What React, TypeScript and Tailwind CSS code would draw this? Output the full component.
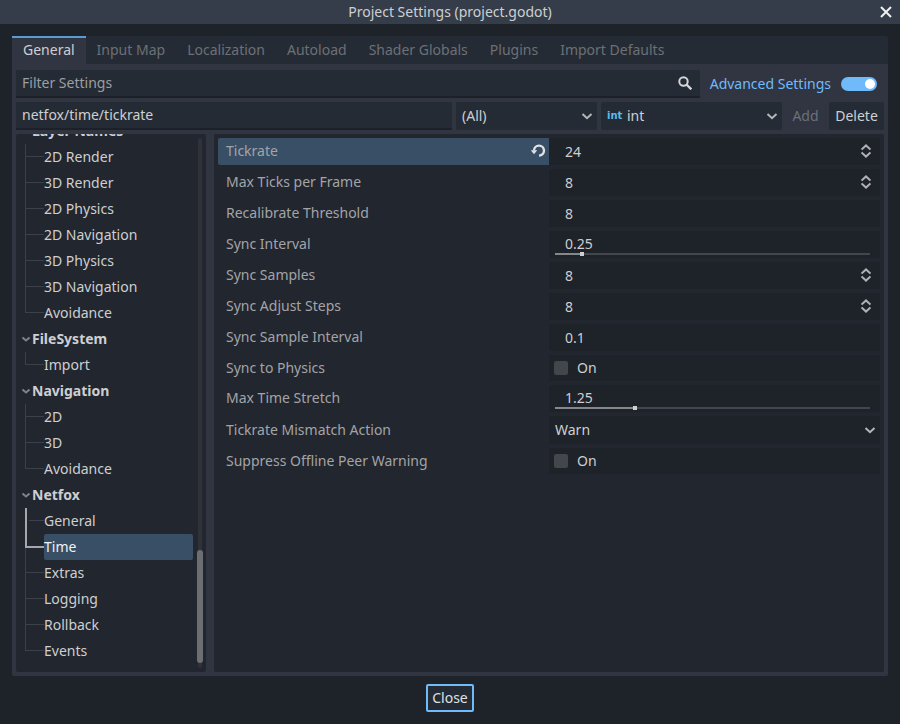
import { useState } from "react";
import type { ReactNode } from "react";

const TABS = ["General", "Input Map", "Localization", "Autoload", "Shader Globals", "Plugins", "Import Defaults"];

const TREE = [
  { name: "Layer Names", items: ["2D Render", "3D Render", "2D Physics", "2D Navigation", "3D Physics", "3D Navigation", "Avoidance"] },
  { name: "FileSystem",  items: ["Import"] },
  { name: "Navigation",  items: ["2D", "3D", "Avoidance"] },
  { name: "Netfox",      items: ["General", "Time", "Extras", "Logging", "Rollback", "Events"] },
];

type Setting =
  | { kind: "spin" | "text"; label: string; value: string; changed?: boolean }
  | { kind: "slider"; label: string; value: number; min: number; max: number }
  | { kind: "check"; label: string }
  | { kind: "select"; label: string; options: string[] };

const SETTINGS: Setting[] = [
  { kind: "spin",   label: "Tickrate", value: "24", changed: true },
  { kind: "spin",   label: "Max Ticks per Frame", value: "8" },
  { kind: "text",   label: "Recalibrate Threshold", value: "8" },
  { kind: "slider", label: "Sync Interval", value: 0.25, min: 0.1, max: 2 },
  { kind: "spin",   label: "Sync Samples", value: "8" },
  { kind: "spin",   label: "Sync Adjust Steps", value: "8" },
  { kind: "text",   label: "Sync Sample Interval", value: "0.1" },
  { kind: "check",  label: "Sync to Physics" },
  { kind: "slider", label: "Max Time Stretch", value: 1.25, min: 1, max: 2 },
  { kind: "select", label: "Tickrate Mismatch Action", options: ["Warn", "Disconnect", "Adjust", "Signal"] },
  { kind: "check",  label: "Suppress Offline Peer Warning" },
];

// ── icons ──
function Chevron() {
  return (
    <svg className="pointer-events-none shrink-0" width="12" height="12" viewBox="0 0 12 12" fill="none" stroke="#b4b6ba" strokeWidth="2" aria-hidden="true">
      <path d="M1.5 4 6 8.2 10.5 4" />
    </svg>
  );
}

function Updown() {
  return (
    <svg width="10" height="14" viewBox="0 0 10 14" fill="none" stroke="#b0b2b6" strokeWidth="2" aria-hidden="true">
      <path d="M.5 5.6 5 1.4l4.5 4.2M.5 8.4 5 12.6l4.5-4.2" />
    </svg>
  );
}

function Reload() {
  return (
    <svg width="16" height="16" viewBox="0 0 16 16" fill="none" aria-hidden="true">
      <path d="M4 7.6a5 5 0 1 1 5 5" stroke="#e0e2e5" strokeWidth="2.4" />
      <path d="M.8 7.2h6.4L4 11.2Z" fill="#e0e2e5" />
    </svg>
  );
}

// ── tree ──
function TreeGroup({ name, items, selected, onSelect }: { name: string; items: string[]; selected: string; onSelect: (path: string) => void }) {
  const current = items.findIndex(item => `${name}/${item}` === selected);
  return (
    <li className="shrink-0">
      <div className="flex h-[26px] items-center gap-0.5 pl-1.5 font-bold">
        <svg width="8" height="8" viewBox="0 0 8 8" fill="none" stroke="#7e8187" strokeWidth="2" aria-hidden="true">
          <path d="M.5 2.5 4 5.5l3.5-3" />
        </svg>
        {name}
      </div>
      <ul>
        {items.map((item, i) => {
          const above = i < current;
          const active = i === current;
          const last = i === items.length - 1;
          return (
            <li key={item} className="flex h-[26px] pl-[9px]">
              <div className="flex w-[19px] shrink-0 flex-col">
                <div className={active ? "h-[14px] border-b-2 border-l-2 border-[#a5a7ab]" : above ? "h-[13px] border-l-2 border-[#a5a7ab] pl-0.5" : "h-[13px] border-b border-l border-[#3c4048]"}>
                  {above && <div className="h-full border-b border-[#3c4048]" />}
                </div>
                {!last && <div className={above ? "flex-1 border-l-2 border-[#a5a7ab]" : "flex-1 border-l border-[#3c4048]"} />}
              </div>
              <button type="button" onClick={() => onSelect(`${name}/${item}`)}
                className={active ? "flex-1 rounded-[2px] bg-[#394f66] text-left text-[#f0f2f5]" : "flex-1 rounded-[2px] text-left"}>
                {item}
              </button>
            </li>
          );
        })}
      </ul>
    </li>
  );
}

// ── inspector rows ──
function Row({ id, label, changed, children }: { id: string; label: string; changed?: boolean; children: ReactNode }) {
  return (
    <div className="grid grid-cols-2">
      <div className={changed ? "flex items-center justify-between rounded-l-[2px] bg-[#394f66] pb-px pl-2 pr-[3px]" : "flex items-center justify-between pb-px pl-2"}>
        <label htmlFor={id} className="text-[#a2a4a8]">{label}</label>
        {changed && <button type="button" aria-label="Reset to default"><Reload /></button>}
      </div>
      <div className="rounded-[2px] bg-[#1e2229]">{children}</div>
    </div>
  );
}

function SliderField({ id, label, initial, min, max }: { id: string; label: string; initial: number; min: number; max: number }) {
  const [value, setValue] = useState(initial);
  const fill = ((value - min) / (max - min)) * 100;
  return (
    <div className="flex h-[27px] flex-col pl-1.5 pr-2.5">
      <input id={id} value={value} onChange={e => setValue(Number(e.target.value) || min)}
        className="h-[22px] w-full bg-transparent px-2.5 pt-0.5 outline-none" />
      <input type="range" aria-label={`${label} slider`} min={min} max={max} step={0.01} value={value}
        onChange={e => setValue(Number(e.target.value))}
        style={{ background: `linear-gradient(to right, #85878b ${fill}%, #43464d ${fill}%)` }}
        className="h-0.5 w-full appearance-none outline-none [&::-webkit-slider-thumb]:size-1 [&::-webkit-slider-thumb]:appearance-none [&::-webkit-slider-thumb]:bg-[#cdcfd2]" />
    </div>
  );
}

function SettingRow({ setting }: { setting: Setting }) {
  const id = setting.label.toLowerCase().replaceAll(" ", "_");

  if (setting.kind === "slider") {
    return (
      <Row id={id} label={setting.label}>
        <SliderField id={id} label={setting.label} initial={setting.value} min={setting.min} max={setting.max} />
      </Row>
    );
  }
  if (setting.kind === "check") {
    return (
      <Row id={id} label={setting.label}>
        <label className="flex h-[26px] items-center gap-[9px] pl-[5px]">
          <input id={id} type="checkbox" className="size-3.5 appearance-none rounded-[2px] bg-[#43464b] checked:bg-[#70bafa]" />
          On
        </label>
      </Row>
    );
  }
  if (setting.kind === "select") {
    return (
      <Row id={id} label={setting.label}>
        <div className="flex h-7 items-center pl-1.5 pr-1">
          <select id={id} className="h-full flex-1 appearance-none bg-transparent outline-none">
            {setting.options.map(o => <option key={o}>{o}</option>)}
          </select>
          <Chevron />
        </div>
      </Row>
    );
  }
  return (
    <Row id={id} label={setting.label} changed={setting.changed}>
      <div className="flex h-[27px] items-center pb-px pl-4 pr-[9px]">
        <input id={id} defaultValue={setting.value} className="h-full min-w-0 flex-1 bg-transparent outline-none" />
        {setting.kind === "spin" && <button type="button" aria-label={`Step ${setting.label}`}><Updown /></button>}
      </div>
    </Row>
  );
}

export default function App() {
  const [tab, setTab]           = useState("General");
  const [selected, setSelected] = useState("Netfox/Time");
  const [advanced, setAdvanced] = useState(true);

  return (
    <div className="flex h-screen flex-col bg-[#1e2229] font-['Noto_Sans',sans-serif] text-[14px] leading-5 text-[#cdcfd2]">
      {/* Title bar */}
      <header className="flex h-6 shrink-0 items-center bg-[#363d4a] px-2">
        <div className="w-3" />
        <h1 className="flex-1 text-center">Project Settings (project.godot)</h1>
        <button type="button" aria-label="Close window">
          <svg width="12" height="12" viewBox="0 0 12 12" stroke="#eef0f2" strokeWidth="2" aria-hidden="true">
            <path d="m1 1 10 10M11 1 1 11" />
          </svg>
        </button>
      </header>

      <main className="mx-3 mt-3 flex min-h-0 flex-1 flex-col">
        <nav className="flex h-7 shrink-0 rounded-t-[2px] bg-[#252b34]">
          {TABS.map(t => (
            <button key={t} type="button" onClick={() => setTab(t)}
              className={t === tab
                ? "border-t-2 border-[#5b9bd3] bg-[#303541] px-[11px] pb-0.5"
                : "px-[11px] text-[#6c7077]"}>
              {t}
            </button>
          ))}
        </nav>

        <div className="flex min-h-0 flex-1 flex-col gap-1 rounded-b-[2px] bg-[#303541] px-1 pb-1 pt-1.5">
          {/* Filter */}
          <div className="flex h-7 shrink-0">
            <div className="flex flex-1 items-center rounded-t-[2px] border-b-2 border-[#1c2127] bg-[#252b34] pl-1.5 pr-2">
              <input aria-label="Filter Settings" placeholder="Filter Settings" className="h-full flex-1 bg-transparent pb-px outline-none placeholder:text-[#9b9ea2]" />
              <svg width="14" height="14" viewBox="0 0 14 14" fill="none" stroke="#d4d6d8" strokeWidth="2" aria-hidden="true">
                <circle cx="5.5" cy="5.5" r="4.2" />
                <path d="m8.5 8.5 4.8 4.8" strokeWidth="2.4" />
              </svg>
            </div>
            <label className="flex items-center gap-2.5 pl-2.5 pr-[7px] text-[#70bafa]">
              Advanced Settings
              <input type="checkbox" role="switch" checked={advanced} onChange={e => setAdvanced(e.target.checked)}
                className="flex h-3.5 w-9 appearance-none items-center rounded-full bg-[#5a5d64] px-0.5 before:size-2.5 before:rounded-full before:bg-white checked:justify-end checked:bg-[#70bafa]" />
            </label>
          </div>

          {/* Property editor */}
          <div className="flex h-7 shrink-0 gap-1">
            <input aria-label="Property path" defaultValue="netfox/time/tickrate"
              className="min-w-0 flex-1 rounded-t-[2px] border-b-2 border-[#1c2127] bg-[#252b34] px-1.5 outline-none" />
            <div className="flex w-[141px] items-center rounded-[2px] bg-[#252b34] pl-1.5 pr-1">
              <select aria-label="Feature" className="h-full flex-1 appearance-none bg-transparent outline-none">
                <option>(All)</option>
              </select>
              <Chevron />
            </div>
            <div className="flex w-[181px] items-center gap-1 rounded-[2px] bg-[#252b34] pl-1.5 pr-1">
              <span className="w-4 font-['DejaVu_Sans',sans-serif] text-[10px] font-bold text-[#5abbef]" aria-hidden="true">int</span>
              <select aria-label="Type" className="h-full flex-1 appearance-none bg-transparent outline-none">
                <option>int</option>
                <option>float</option>
                <option>bool</option>
              </select>
              <Chevron />
            </div>
            <button type="button" disabled className="w-[39px] rounded-[2px] text-[#6c7079]">Add</button>
            <button type="button" className="w-[55px] rounded-[2px] bg-[#252b34]">Delete</button>
          </div>

          <div className="flex min-h-0 flex-1 gap-2">
            {/* Sections */}
            <aside className="flex w-[190px] shrink-0 rounded-[2px] bg-[#22262e]">
              <ul className="flex min-w-0 flex-1 flex-col justify-end overflow-hidden pb-2">
                {TREE.map(group => (
                  <TreeGroup key={group.name} name={group.name} items={group.items} selected={selected} onSelect={setSelected} />
                ))}
              </ul>
              <div className="my-1 ml-1 mr-[3px] flex w-1.5 flex-col items-center">
                <div className="w-1 flex-1 rounded-t-full bg-[#2f3239]" />
                <div className="h-[113px] w-1.5 rounded-full bg-[#6c6e72]" />
                <div className="h-[5px] w-1 rounded-b-full bg-[#2f3239]" />
              </div>
            </aside>

            {/* Inspector */}
            <section className="flex min-w-0 flex-1 flex-col gap-1 overflow-hidden rounded-[2px] bg-[#22262e] p-1">
              {SETTINGS.map(s => <SettingRow key={s.label} setting={s} />)}
            </section>
          </div>
        </div>
      </main>

      <footer className="flex shrink-0 justify-center pb-3 pt-2">
        <button type="button" className="h-7 rounded-[2px] border-2 border-[#70bafa] bg-[#252b34] px-1 text-[#dfe1e4]">Close</button>
      </footer>
    </div>
  );
}
